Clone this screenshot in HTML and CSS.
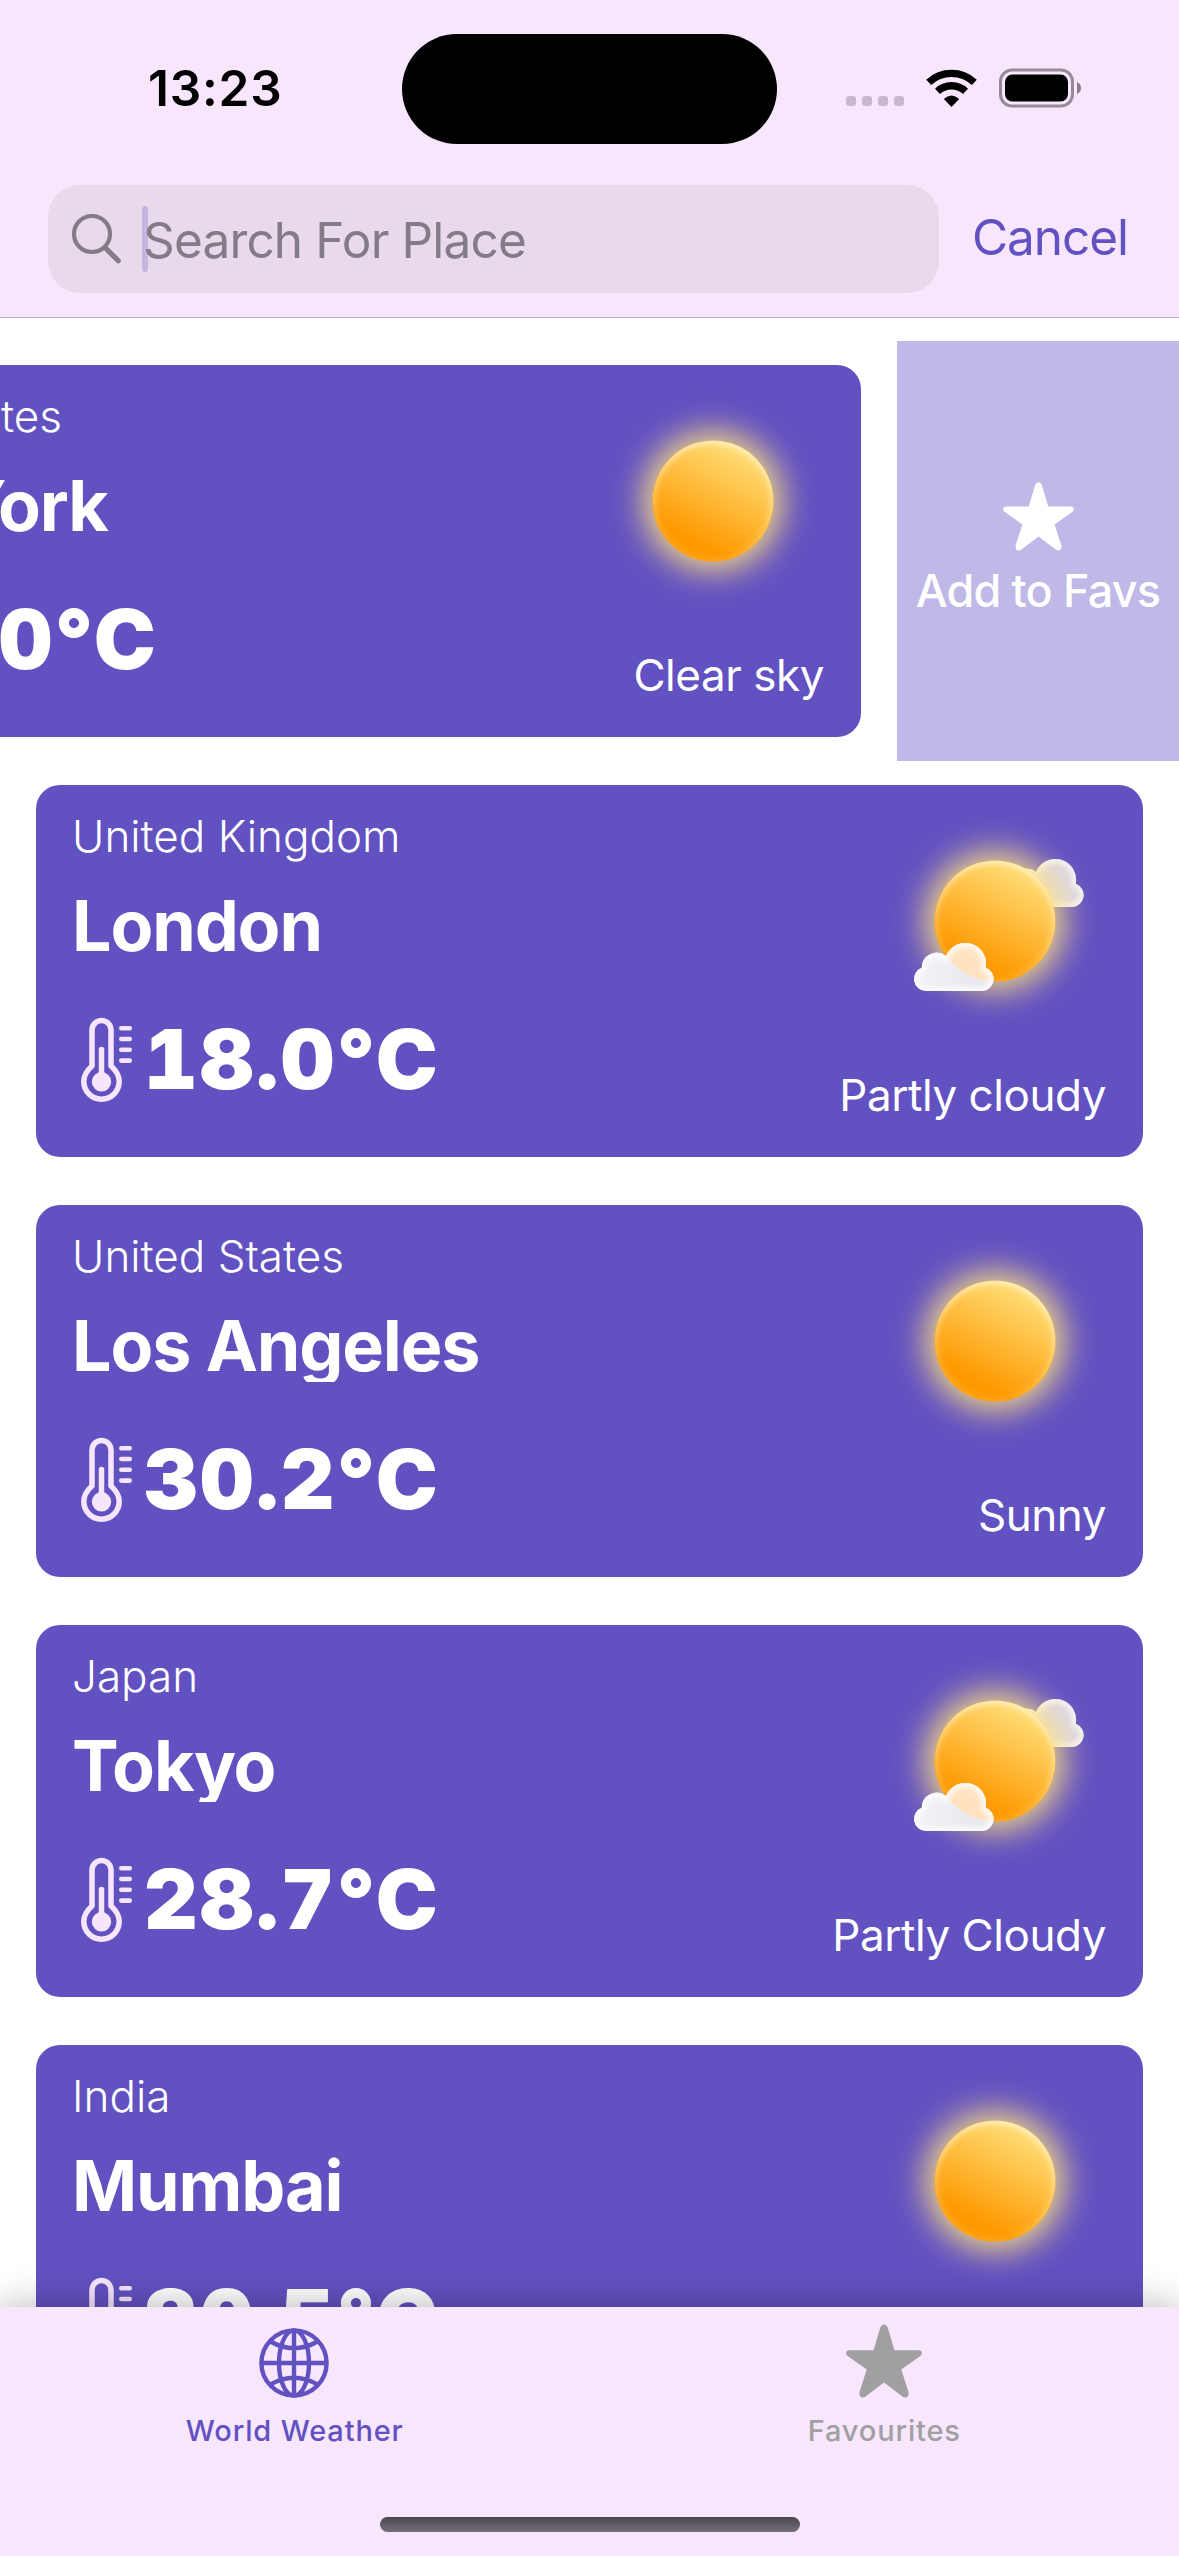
FILE: index.html
```html
<!DOCTYPE html>
<html lang="en">
<head>
<meta charset="utf-8">
<title>World Weather</title>
<link rel="stylesheet" href="styles.css">
</head>
<body>
<svg class="defs" aria-hidden="true">
  <defs>
    <linearGradient id="sunFill" x1="0.72" y1="0.04" x2="0.32" y2="0.82">
      <stop offset="0" stop-color="#ffe07c"/>
      <stop offset="1" stop-color="#ff9900"/>
    </linearGradient>
    <linearGradient id="rimFill" x1="0.6" y1="0" x2="0.4" y2="1">
      <stop offset="0" stop-color="#fff8e0"/>
      <stop offset="0.5" stop-color="#ffedc0" stop-opacity="0.6"/>
      <stop offset="1" stop-color="#ffd480" stop-opacity="0.25"/>
    </linearGradient>
    <linearGradient id="cloudFill" x1="0" y1="0" x2="1" y2="0.4">
      <stop offset="0" stop-color="#f6f5fa"/>
      <stop offset="1" stop-color="#e8e7ef"/>
    </linearGradient>
    <filter id="glow" x="-100%" y="-100%" width="300%" height="300%"><feGaussianBlur stdDeviation="16"/></filter>
    <filter id="soft" x="-20%" y="-20%" width="140%" height="140%"><feGaussianBlur stdDeviation="3"/></filter>
    <clipPath id="sunClip"><circle cx="111" cy="111" r="60"/></clipPath>
    <path id="cloudShape" d="M42 181A12 12 0 0 1 37.7 157.8A15 15 0 0 1 62 146A20.8 20.8 0 0 1 101.700 157.8A12 12 0 0 1 99 181Z"/>
    <clipPath id="cloudClip"><use href="#cloudShape"/></clipPath>

    <symbol id="sun" viewBox="0 0 222 222" overflow="visible">
      <circle cx="111" cy="111" r="70" fill="#ffe37f" opacity="0.9" filter="url(#glow)"/>
      <circle cx="111" cy="111" r="60.500" fill="url(#sunFill)"/>
      <g clip-path="url(#sunClip)"><circle cx="111" cy="111" r="61" fill="none" stroke="url(#rimFill)" stroke-width="6" filter="url(#soft)"/></g>
    </symbol>

    <symbol id="partly" viewBox="0 0 222 222" overflow="visible">
      <g transform="translate(90 -84)">
        <use href="#cloudShape" fill="#dad6ea"/>
        <g clip-path="url(#cloudClip)"><use href="#cloudShape" fill="none" stroke="#fff" stroke-width="6" filter="url(#soft)"/></g>
      </g>
      <use href="#sun" width="222" height="222"/>
      <use href="#cloudShape" fill="url(#cloudFill)"/>
      <g clip-path="url(#cloudClip)">
        <circle cx="111" cy="111" r="60" fill="#ffe2bf"/>
        <use href="#cloudShape" fill="none" stroke="#fff" stroke-width="7" filter="url(#soft)"/>
      </g>
    </symbol>

    <symbol id="thermo" viewBox="0 0 51 86">
      <path d="M11 50V14a9.500 9.500 0 0 1 19 0V50C34 53.500 38.200 58 38.200 65.500A17.700 17.700 0 0 1 2.800 65.500C2.800 58 7 53.500 11 50Z" fill="none" stroke="#f7e5fb" stroke-width="5.500" stroke-linejoin="round"/>
      <path d="M20.500 33.500V60" stroke="#f7e5fb" stroke-width="5.500" stroke-linecap="round"/>
      <circle cx="20.500" cy="65.800" r="9.700" fill="#f7e5fb"/>
      <path d="M40.300 12.200h8.400M40.300 23h8.400M40.300 33.800h8.400M40.300 44.600h8.400" stroke="#f7e5fb" stroke-width="4.600" stroke-linecap="round"/>
    </symbol>

    <symbol id="star" viewBox="0 0 71 69">
      <path fill="currentColor" d="M32.300 2.600Q35.500 -2.300 38.700 2.600L45.200 24.500H67.300Q73 25 69.800 29.500L51.600 42.500L58.400 63.500Q58.600 70.500 53 67.800L35.500 54.500L18 67.800Q12.400 70.500 12.600 63.500L19.400 42.500L1.200 29.500Q-2 25 3.700 24.500H25.800Z"/>
    </symbol>
  </defs>
</svg>

<div class="screen">
  <header class="header">
    <div class="status">
      <span class="status__time">13:23</span>
      <span class="status__island"></span>
      <span class="status__icons">
        <svg class="status__signal" viewBox="0 0 58 12" fill="#c8b8cd"><rect width="10" height="10" y="1" rx="3"/><rect x="16" y="1" width="10" height="10" rx="3"/><rect x="32" y="1" width="10" height="10" rx="3"/><rect x="48" y="1" width="10" height="10" rx="3"/></svg>
        <svg class="status__wifi" viewBox="0 0 51 38">
          <path d="M2.700 13.300A33.500 33.500 0 0 1 48.300 13.300M11.500 22.300A20.500 20.500 0 0 1 39.500 22.300" fill="none" stroke="#000" stroke-width="7.300"/>
          <path d="M25.500 38L17.800 30.100Q25.500 22.800 33.200 30.100Z"/>
        </svg>
        <svg class="status__battery" viewBox="0 0 83 40"><rect x="1.500" y="2" width="72" height="36" rx="11.500" fill="none" stroke="#968a9a" stroke-width="3"/><rect x="6" y="6.500" width="63" height="27" rx="7.500"/><path d="M78 14Q82 16 82 20T78 26Z" fill="#877b8b"/></svg>
      </span>
    </div>
    <div class="search">
      <div class="search__field">
        <svg class="search__icon" viewBox="0 0 50 50" fill="none" stroke="#847b89" stroke-linecap="round"><circle cx="20" cy="20" r="18" stroke-width="4.200"/><path d="M33 33.500L46.200 46.700" stroke-width="5.200"/></svg>
        <span class="search__caret"></span>
        <span class="search__placeholder">Search For Place</span>
      </div>
      <span class="search__cancel">Cancel</span>
    </div>
  </header>

  <main class="list">
    <div class="row row--swiped">
      <article class="card">
        <div class="card__info">
          <div class="card__country">United States</div>
          <div class="card__city">New York</div>
          <div class="card__temp"><svg class="card__thermo"><use href="#thermo"/></svg>22.0°C</div>
        </div>
        <div class="card__weather"><svg class="card__icon"><use href="#sun"/></svg><div class="card__condition">Clear sky</div></div>
      </article>
      <div class="action"><svg class="action__star"><use href="#star"/></svg><span class="action__label">Add to Favs</span></div>
    </div>

    <div class="row">
      <article class="card">
        <div class="card__info">
          <div class="card__country">United Kingdom</div>
          <div class="card__city">London</div>
          <div class="card__temp"><svg class="card__thermo"><use href="#thermo"/></svg>18.0°C</div>
        </div>
        <div class="card__weather"><svg class="card__icon"><use href="#partly"/></svg><div class="card__condition">Partly cloudy</div></div>
      </article>
    </div>

    <div class="row">
      <article class="card">
        <div class="card__info">
          <div class="card__country">United States</div>
          <div class="card__city">Los Angeles</div>
          <div class="card__temp"><svg class="card__thermo"><use href="#thermo"/></svg>30.2°C</div>
        </div>
        <div class="card__weather"><svg class="card__icon"><use href="#sun"/></svg><div class="card__condition">Sunny</div></div>
      </article>
    </div>

    <div class="row">
      <article class="card">
        <div class="card__info">
          <div class="card__country">Japan</div>
          <div class="card__city">Tokyo</div>
          <div class="card__temp"><svg class="card__thermo"><use href="#thermo"/></svg>28.7°C</div>
        </div>
        <div class="card__weather"><svg class="card__icon"><use href="#partly"/></svg><div class="card__condition">Partly Cloudy</div></div>
      </article>
    </div>

    <div class="row">
      <article class="card">
        <div class="card__info">
          <div class="card__country">India</div>
          <div class="card__city">Mumbai</div>
          <div class="card__temp"><svg class="card__thermo"><use href="#thermo"/></svg>30.5°C</div>
        </div>
        <div class="card__weather"><svg class="card__icon"><use href="#sun"/></svg></div>
      </article>
    </div>
  </main>

  <nav class="tabs">
    <div class="tabs__bar">
      <div class="tab tab--active">
        <span class="tab__icon"><svg class="tab__globe" viewBox="0 0 70 70" fill="none" stroke="currentColor" stroke-width="4.400"><circle cx="35" cy="35" r="32.600"/><ellipse cx="35" cy="35" rx="15" ry="32.600"/><path d="M35 2v66M2 35h66M11.500 13.500Q35 27 58.500 13.500M11.500 56.500Q35 43 58.500 56.500"/></svg></span>
        <span class="tab__label">World Weather</span>
      </div>
      <div class="tab">
        <span class="tab__icon"><svg class="tab__star"><use href="#star"/></svg></span>
        <span class="tab__label">Favourites</span>
      </div>
    </div>
    <div class="tabs__indicator"></div>
  </nav>
</div>
</body>
</html>
```

FILE: styles.css
```css
* { box-sizing: border-box; }

body {
  margin: 0;
  font-family: Inter, "Liberation Sans", sans-serif;
  background: #fff;
}

.defs { position: absolute; width: 0; height: 0; }

svg { display: block; flex: none; overflow: visible; }

.screen {
  display: flex;
  flex-direction: column;
  width: 1179px;
  height: 2556px;
  overflow: hidden;
}

/* Header */
.header {
  flex: none;
  height: 318px;
  background: #f7e6fc;
  border-bottom: 1px solid #b9aebd;
}

.status {
  display: grid;
  grid-template-columns: 402px 375px 402px;
  align-items: center;
  height: 176px;
}

.status__time {
  padding-left: 148px;
  font-size: 49.5px;
  font-weight: 600;
  line-height: 72px;
  letter-spacing: 0.8px;
}

.status__island {
  height: 110px;
  margin-top: 2px;
  border-radius: 55px;
  background: #000;
}

.status__icons {
  display: flex;
  align-items: center;
  gap: 22px;
  padding-left: 69px;
}

.status__signal { width: 58px; height: 12px; margin-top: 26px; }
.status__wifi { width: 51px; height: 38px; }
.status__battery { width: 83px; height: 40px; }

.search {
  display: flex;
  align-items: center;
  padding: 9px 0 0 48px;
}

.search__field {
  display: flex;
  align-items: center;
  width: 891px;
  height: 108px;
  padding-left: 24px;
  border-radius: 32px;
  background: #e8d9eb;
  color: #847b89;
}

.search__icon { width: 50px; height: 50px; }

.search__caret {
  width: 6px;
  height: 66px;
  margin-left: 20px;
  border-radius: 3px;
  background: #c4b6e0;
}

.search__placeholder {
  margin: 2px 0 0 -5px;
  font-size: 49.5px;
  letter-spacing: -0.83px;
}

.search__cancel {
  margin: -4px 0 0 33px;
  font-size: 49.5px;
  letter-spacing: -1.05px;
  color: #6251c1;
}

/* City list */
.list {
  flex: 1;
  min-height: 0;
  padding-top: 23px;
  overflow: hidden;
}

.row {
  display: flex;
  height: 420px;
}

.row--swiped { margin-left: -282px; }

.card {
  display: flex;
  flex: none;
  justify-content: space-between;
  width: 1107px;
  height: 372px;
  margin: 24px 36px;
  padding: 24px 37px 0 36px;
  border-radius: 24px;
  background: #6251c1;
  color: #fff;
}

.card__country {
  font-size: 44px;
  font-weight: 300;
  line-height: 54px;
}

.card__city {
  height: 73px;
  margin-top: 26px;
  overflow: hidden;
  font-size: 70px;
  font-weight: 700;
  line-height: 73px;
  letter-spacing: -1.15px;
}

.card__temp {
  display: flex;
  align-items: center;
  margin-top: 47px;
  font-size: 83px;
  font-weight: 900;
  line-height: 100px;
  letter-spacing: 2.5px;
  font-variant-numeric: tabular-nums;
}

.card__thermo { width: 51px; height: 86px; margin: 0 12px 0 9px; }

.card__weather {
  display: flex;
  flex-direction: column;
  align-items: flex-end;
  gap: 36px;
  padding-top: 1px;
}

.card__icon { width: 222px; height: 222px; }

.card__condition {
  font-size: 44px;
  line-height: 54px;
  letter-spacing: -0.45px;
}

.action {
  display: flex;
  flex: none;
  flex-direction: column;
  align-items: center;
  gap: 13px;
  width: 282px;
  padding-top: 141px;
  background: #c0b8e7;
  color: #fff;
}

.action__star { width: 71px; height: 69px; }

.action__label {
  font-size: 45px;
  font-weight: 500;
  line-height: 54px;
  letter-spacing: -0.85px;
}

/* Tab bar */
.tabs {
  position: relative;
  flex: none;
  display: flex;
  flex-direction: column;
  justify-content: space-between;
  align-items: center;
  height: 249px;
  padding: 17px 0 24px;
  background: #f7e6fc;
  box-shadow: 0 0 36px rgba(0, 0, 0, 0.3);
}

.tabs__bar { display: flex; width: 100%; }

.tab {
  display: flex;
  flex: 1;
  flex-direction: column;
  align-items: center;
  gap: 15px;
  color: #a09fa1;
}

.tab--active { color: #6251c1; }

.tab__icon { display: flex; align-items: flex-end; height: 74px; }
.tab__globe { width: 70px; height: 70px; margin-right: 2px; }
.tab__star { width: 76px; height: 74px; }

.tab__label {
  font-size: 29px;
  font-weight: 500;
  line-height: 36px;
  letter-spacing: 0.85px;
}

.tabs__indicator {
  width: 420px;
  height: 15px;
  border-radius: 8px;
  background: linear-gradient(#4d474f, #766d78);
}
```
